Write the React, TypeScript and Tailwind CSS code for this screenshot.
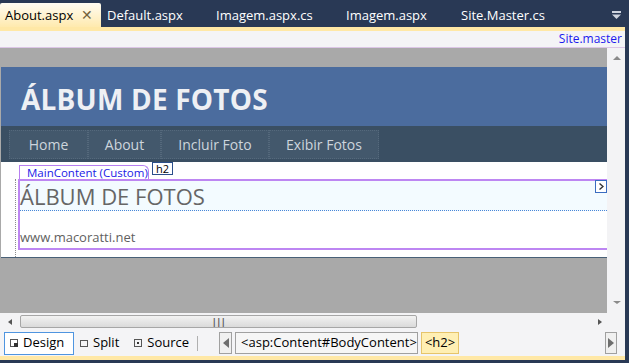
import React from "react";

const TABS = [
  { nome: "Default.aspx", w: "w-[109px]" },
  { nome: "Imagem.aspx.cs", w: "w-[130px]" },
  { nome: "Imagem.aspx", w: "w-[115px]" },
  { nome: "Site.Master.cs", w: "w-[120px]" },
];

const MENU = [
  { nome: "Home", w: "w-[79px]" },
  { nome: "About", w: "w-[73px]" },
  { nome: "Incluir Foto", w: "w-[108px]" },
  { nome: "Exibir Fotos", w: "w-[110px]" },
];

function TabBar() {
  return (
    <div className="h-[27px] bg-[#293955] flex items-end">
      <div className="w-[101px] h-[24px] rounded-t-[2px] bg-gradient-to-b from-[#fffcf2] to-[#ffeaae] flex items-center pl-[5px] pr-[8px] justify-between">
        <span className="text-[13px] text-black leading-none">About.aspx</span>
        <span className="text-[14px] text-[#75633d] leading-none">✕</span>
      </div>
      {TABS.map((t) => (
        <div key={t.nome} className={`${t.w} h-[24px] flex items-center pl-[6px]`}>
          <span className="text-[13px] text-white leading-none">{t.nome}</span>
        </div>
      ))}
      <div className="flex-1" />
      <div className="h-[24px] w-[17px] flex flex-col items-center justify-center">
        <svg width="9" height="8" viewBox="0 0 9 8">
          <rect x="0" y="0" width="9" height="2" fill="#ced4df" />
          <path d="M0 3.5 H9 L4.5 8 Z" fill="#ced4df" />
        </svg>
      </div>
    </div>
  );
}

function PaginaDesign() {
  return (
    <div className="bg-white border-b border-[#496077]">
      <div className="h-[59px] bg-[#4b6c9e] flex items-center pl-[20px] pt-[4px]">
        <h1 className="text-[28px] font-bold text-[#eef0f4] leading-none tracking-[0.2px]">ÁLBUM DE FOTOS</h1>
      </div>
      <div className="h-[36px] bg-[#3a4f63] flex items-center pl-[8px]">
        {MENU.map((m) => (
          <div
            key={m.nome}
            className={`${m.w} h-[29px] bg-[#43586c] border border-dotted border-[#55697c] flex items-center justify-center`}
          >
            <span className="text-[14px] text-[#cdd5dd]">{m.nome}</span>
          </div>
        ))}
      </div>
      <div className="h-[95px] pl-[14px] flex flex-col">
        <div className="flex items-start h-[17px] pl-[4px]">
          <div className="mt-[3px] h-[14px] w-[130px] border border-b-0 border-[#b77ff0] rounded-tr-[6px] bg-white flex items-center pl-[7px]">
            <span className="text-[11.5px] text-[#1a1ae6] leading-none whitespace-nowrap">MainContent (Custom)</span>
          </div>
          <div className="ml-[3px] h-[13px] px-[3px] border border-[#2b4f8a] bg-white flex items-center">
            <span className="text-[11px] text-black leading-none">h2</span>
          </div>
        </div>
        <div className="border-l border-dotted border-[#8c8c8c] pl-[2px] flex-1 flex flex-col">
          <div className="h-[71px] border-y-2 border-l-2 border-[#bd86f2] flex flex-col">
            <div className="h-[30px] bg-[#f3fbff] border-b border-dotted border-[#4a86d8] flex items-center justify-between">
              <span className="text-[22px] text-[#666666] leading-none">ÁLBUM DE FOTOS</span>
              <div className="self-start -mt-[1px] w-[12px] h-[13px] border border-[#3a6cc0] bg-white flex items-center justify-center">
                <svg width="5" height="7" viewBox="0 0 5 7">
                  <path d="M0.5 0.5 L4 3.5 L0.5 6.5" stroke="#333" strokeWidth="1.4" fill="none" />
                </svg>
              </div>
            </div>
            <div className="flex-1 flex items-end pb-[4px]">
              <span className="text-[13px] text-[#5f5f5f] leading-none">www.macoratti.net</span>
            </div>
          </div>
        </div>
      </div>
    </div>
  );
}

function BarraInferior() {
  return (
    <div className="h-[26px] bg-[#f4f4f6] flex items-center pl-[4px]">
      <div className="h-[23px] w-[70px] border border-[#4f95e0] bg-white flex items-center gap-[5px] pl-[5px]">
        <svg width="8" height="8" viewBox="0 0 8 8">
          <rect x="0.5" y="0.5" width="7" height="7" fill="none" stroke="#555" />
          <rect x="4" y="4" width="4" height="4" fill="#333" />
        </svg>
        <span className="text-[13px] text-black">Design</span>
      </div>
      <div className="flex items-center gap-[5px] ml-[6px]">
        <svg width="8" height="7" viewBox="0 0 8 7">
          <rect x="0.5" y="0.5" width="7" height="6" fill="none" stroke="#555" />
        </svg>
        <span className="text-[13px] text-black">Split</span>
      </div>
      <div className="flex items-center gap-[5px] ml-[15px]">
        <svg width="8" height="8" viewBox="0 0 8 8">
          <rect x="0.5" y="0.5" width="7" height="7" fill="none" stroke="#555" />
          <rect x="3" y="3" width="2" height="2" fill="#333" />
        </svg>
        <span className="text-[13px] text-black">Source</span>
      </div>
      <div className="ml-[8px] w-px h-[15px] bg-[#b0b0b0]" />
      <div className="ml-[21px] w-[13px] h-[22px] border border-[#a0a0a0] bg-[#f0f0f0] flex items-center justify-center">
        <svg width="6" height="10" viewBox="0 0 6 10">
          <path d="M6 0 L0 5 L6 10 Z" fill="#6e6e6e" />
        </svg>
      </div>
      <div className="ml-[3px] w-[183px] h-[22px] border border-[#a0a0a0] bg-[#f6f6f6] flex items-center pl-[5px]">
        <span className="text-[13px] text-black">&lt;asp:Content#BodyContent&gt;</span>
      </div>
      <div className="ml-[3px] w-[38px] h-[22px] border border-[#e6c46a] bg-[#ffefb3] flex items-center justify-center">
        <span className="text-[13px] text-black">&lt;h2&gt;</span>
      </div>
      <div className="flex-1" />
      <div className="mr-[8px] w-[12px] h-[22px] border border-[#a0a0a0] bg-[#f0f0f0] flex items-center justify-center">
        <svg width="6" height="10" viewBox="0 0 6 10">
          <path d="M0 0 L6 5 L0 10 Z" fill="#6e6e6e" />
        </svg>
      </div>
    </div>
  );
}

export default function App() {
  return (
    <div className="w-[629px] h-[363px] flex bg-[#293955] font-['Open_Sans',sans-serif] overflow-hidden">
      <div className="w-[625px] flex flex-col">
        <TabBar />
        <div className="h-[4px] bg-[#ffe8a6]" />
        <div className="h-[16px] bg-[#f4f4f6] flex items-center justify-end pr-[3px]">
          <span className="text-[12px] text-[#1a1aee] leading-none">Site.master</span>
        </div>
        <div className="h-px bg-[#dcc6e6]" />
        <div className="h-[265px] flex">
          <div className="w-[607px] bg-[#a9a9a9] pt-[19px] pl-[1px]">
            <PaginaDesign />
          </div>
          <div className="flex-1 bg-[#f3f3f5] flex flex-col items-center justify-between pt-[8px] pb-[9px] pl-[2px]">
            <svg width="8" height="4" viewBox="0 0 8 4">
              <path d="M0 4 L4 0 L8 4 Z" fill="#8a8a8a" />
            </svg>
            <svg width="8" height="3" viewBox="0 0 8 3">
              <path d="M0 0 H8 L4 3 Z" fill="#8a8a8a" />
            </svg>
          </div>
        </div>
        <div className="h-[17px] bg-[#f3f3f5] flex items-center">
          <div className="w-[20px] flex justify-center">
            <svg width="4" height="6" viewBox="0 0 4 6">
              <path d="M4 0 L0 3 L4 6 Z" fill="#555" />
            </svg>
          </div>
          <div className="w-[397px] h-[13px] rounded-[2px] border border-[#a6a6a6] bg-gradient-to-b from-[#f2f2f2] to-[#dadada] flex items-center justify-center">
            <span className="text-[9px] text-[#555] leading-none tracking-[-0.5px] font-bold">|||</span>
          </div>
          <div className="flex-1" />
          <div className="w-[27px] flex justify-start">
            <svg width="4" height="6" viewBox="0 0 4 6">
              <path d="M0 0 L4 3 L0 6 Z" fill="#555" />
            </svg>
          </div>
        </div>
        <BarraInferior />
        <div className="h-[4px] bg-[#ffe8a6]" />
        <div className="flex-1" />
      </div>
      <div className="w-[4px]" />
    </div>
  );
}
